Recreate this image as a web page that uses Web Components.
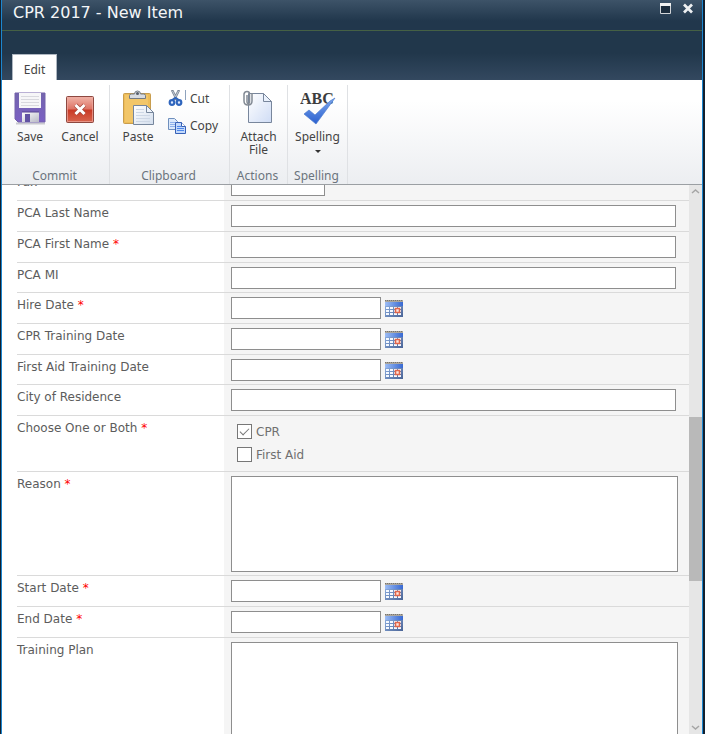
<!DOCTYPE html>
<html lang="en">
<head>
<meta charset="utf-8">
<title>CPR 2017 - New Item</title>
<style>
html,body{margin:0;height:100%;overflow:hidden}
body{font-family:"DejaVu Sans",Verdana,sans-serif;background:#12202e}
</style>
</head>
<body>
<item-dialog></item-dialog>
<script>
const define = (name, html, setup) => customElements.define(name, class extends HTMLElement {
  connectedCallback() {
    if (this.shadowRoot) return;
    const t = document.createElement('template');
    t.innerHTML = typeof html === 'function' ? html(this) : html;
    this.attachShadow({mode:'open'}).append(t.content.cloneNode(true));
    if (setup) setup(this);
  }
});

const icons = {
save:`<svg width="32" height="34" viewBox="0 0 32 34"><defs><linearGradient id="a" x2="0" y2="1"><stop stop-color="#7365ad"/><stop offset="1" stop-color="#7a5fc4"/></linearGradient><linearGradient id="b" x2="1" y2="1"><stop stop-color="#fff"/><stop offset="1" stop-color="#b9b9c6"/></linearGradient></defs><path d="M2 32.500h29" stroke="#c9c9cf" stroke-width="2"/><path d="M1 2h30v29H4l-3-3z" fill="url(#a)" stroke="#7463ab"/><path d="M5 2h22v15H5z" fill="#f6f6f8"/><path d="M7 5.500h18M7 8.500h18M7 11.500h18M7 14.500h18" stroke="#d8d8de"/><path d="M8 21h17v10H8z" fill="url(#b)"/><path d="M11 23h5v8h-5z" fill="#6253a3"/><path d="M8 21h17" stroke="#56458f"/></svg>`,
cancel:`<svg width="32" height="34" viewBox="0 0 32 34"><defs><linearGradient id="a" x2="0" y2="1"><stop stop-color="#f1b5a9"/><stop offset=".48" stop-color="#dd7365"/><stop offset=".52" stop-color="#c93925"/><stop offset="1" stop-color="#d8664f"/></linearGradient></defs><rect x="2.500" y="5.500" width="27" height="26" rx="1" fill="url(#a)" stroke="#8d4840"/><path d="M3.500 6.500h25v24h-25z" fill="none" stroke="#efaaa0" opacity=".7"/><path d="M11.500 14l9 9M20.500 14l-9 9" stroke="#a8483c" stroke-width="4.500"/><path d="M11.500 14l9 9M20.500 14l-9 9" stroke="#fff" stroke-width="3"/></svg>`,
paste:`<svg width="32" height="36" viewBox="0 0 32 36"><defs><linearGradient id="a" x2="1" y2="1"><stop stop-color="#fff"/><stop offset="1" stop-color="#d3deed"/></linearGradient></defs><rect x="1.500" y="3.500" width="27" height="30" rx="1" fill="#eebd58" stroke="#c89d4e"/><path d="M3 5h23v27H3z" fill="#f2c669"/><path d="M7.500 8.500v-3q0-1.500 2-1.500h3q0-3 3-3t3 3h3q2 0 2 1.500v3z" fill="#d8dce1" stroke="#747b85"/><circle cx="15.500" cy="3.500" r="1.500" fill="#555d69"/><path d="M11.500 15.500h13l7 7v12h-20z" fill="url(#a)" stroke="#76869c"/><path d="M24.500 15.500v7h7z" fill="#eef3fa" stroke="#76869c"/><path d="M14 19.500h8M14 22.500h8M14 25.500h14M14 28.500h14M14 31.500h14" stroke="#cdd7e5"/></svg>`,
cut:`<svg width="18" height="17" viewBox="0 0 18 17"><path d="M4 0l5 10M11 0L6 10" stroke="#7c8795" stroke-width="2.500"/><path d="M4.500 1l4 8M10.500 1L7 8" stroke="#c4ccd5"/><path d="M4 10l3.500-2L11 10" fill="none" stroke="#2f65bd" stroke-width="2"/><circle cx="4" cy="12.500" r="2.300" fill="#dfeaff" stroke="#2f65bd" stroke-width="2.200"/><circle cx="11" cy="12.500" r="2.300" fill="#dfeaff" stroke="#2f65bd" stroke-width="2.200"/><path d="M17.500 0v10" stroke="#8fa3bd"/></svg>`,
copy:`<svg width="18" height="16" viewBox="0 0 18 16"><path d="M.5.5h6l3 3v8h-9z" fill="#dce9fb" stroke="#6f8fbd"/><path d="M2 4.500h5M2 6.500h6M2 8.500h6" stroke="#8fb2ec"/><path d="M7.500 4.500h6l4 4v7h-10z" fill="#c3d9fb" stroke="#3761b7"/><path d="M13.500 4.500v4h4" fill="#fff" stroke="#3761b7"/><path d="M9 8.500h4M9 10.500h7M9 12.500h7" stroke="#4d87ea"/></svg>`,
attach:`<svg width="32" height="36" viewBox="0 0 32 36"><defs><linearGradient id="a" x2="1" y2="1"><stop stop-color="#fff"/><stop offset="1" stop-color="#cfdcf5"/></linearGradient></defs><path d="M5.500 3.500h15l8 8v21h-23z" fill="url(#a)" stroke="#78869c"/><path d="M20.500 3.500v8h8z" fill="#eaf1fc" stroke="#78869c"/><path d="M4 5v7q0 1.500 1.300 1.500T6.500 12V4q0-2.500-2.500-2.500T1 4v7q0 4 4 4t4-4V3" fill="none" stroke="#838a94" stroke-width="1.500"/></svg>`,
spelling:`<svg width="36" height="36" viewBox="0 0 36 36"><defs><linearGradient id="a" x2="0" y2="1"><stop stop-color="#7ba7ee"/><stop offset="1" stop-color="#2b60cf"/></linearGradient></defs><text x="0" y="14" font-family="Liberation Serif,serif" font-weight="700" font-size="16" fill="#3d3d3d">ABC</text><path d="M35 8L16 34 4 24l5-4 6 5L30 11z" fill="url(#a)" stroke="#4d7cce" stroke-width=".7"/></svg>`
};

define('tool-button', el => {
  const small = el.hasAttribute('small');
  return `<style>
  :host{display:block}
  button{font:12px/13px "Noto Sans","Open Sans",sans-serif;color:#444;border:0;padding:0;margin:0;background:none;display:flex;align-items:center;
    ${small ? 'gap:4px;height:27px' : 'flex-direction:column;width:100%;padding-top:5px'}}
  .icon{display:flex;align-items:center;justify-content:center;${small ? 'width:18px' : 'height:36px;margin:0 0 4px'}}
  svg{display:block}
  b{width:0;height:0;margin-top:7px;border:3px solid transparent;border-top-color:#333;border-bottom:0}
  </style><button type="button"><span class="icon">${icons[el.getAttribute('icon')]}</span><span><slot></slot></span>${el.hasAttribute('menu') ? '<b></b>' : ''}</button>`;
});

define('ribbon-group', el => `<style>
  :host{display:flex;flex-direction:column;box-sizing:border-box;border-right:1px solid #dfe1e4}
  .tools{flex:1;display:flex;padding-left:var(--inset,0)}
  .name{font:12px/16px "Noto Sans","Open Sans",sans-serif;color:#6b747d;text-align:center;padding-right:2px}
  </style><div class="tools"><slot></slot></div><div class="name">${el.getAttribute('name')}</div>`);

define('calendar-button', `<style>
  :host{display:block}
  button{display:block;border:0;padding:0;background:none}
  svg{display:block}
  </style><button type="button" aria-label="Select a date"><svg width="18" height="18" viewBox="0 0 18 18"><defs><linearGradient id="a" x2="1" y2="0"><stop stop-color="#9dbdf4"/><stop offset="1" stop-color="#3768d2"/></linearGradient><linearGradient id="b" x2="1" y2="1"><stop stop-color="#94b6e8"/><stop offset="1" stop-color="#4a6496"/></linearGradient></defs><path d="M0 2h18v16H0z" fill="url(#b)"/><path d="M0 3h18v4H0z" fill="url(#a)"/><path d="M0 1h18v2H0z" fill="#aaa69e"/><path d="M0 1.500h18" stroke="#77746f" stroke-width="1" stroke-dasharray="1 1"/><path d="M1 8h3v2H1zM5 8h3v2H5zM9 8h3v2H9zM13 8h3v2h-3zM1 11h3v2H1zM5 11h3v2H5zM9 11h3v2H9zM13 11h3v2h-3zM1 14h3v2H1zM5 14h3v2H5zM9 14h3v2H9zM13 14h3v2h-3z" fill="#f5f9ff"/><path d="M10.500 9.500h4v4h-4z" fill="#ffe7de" stroke="#e2664a" stroke-width="1.600"/></svg></button>`);

define('form-field', el => {
  const kind = el.getAttribute('kind') || 'text', label = el.getAttribute('label');
  const control = {
    text:'<input id="c" type="text">',
    short:'<input id="c" class="short" type="text">',
    date:'<input id="c" class="date" type="text"><calendar-button></calendar-button>',
    area:'<textarea id="c"></textarea>',
    choice:'<div id="c" role="group" aria-labelledby="n"><slot></slot></div>'
  }[kind];
  const tag = kind === 'choice' ? 'span' : 'label';
  return `<style>
  :host{display:flex;box-sizing:border-box;min-height:31px;border-top:1px solid #dadada;font-size:12px;line-height:16px;color:#5c5c5c}
  .name{flex:0 0 207px;padding-top:4px}
  em{color:#f00;font-style:normal}
  .field{flex:1;min-width:0;display:flex;gap:4px;align-items:flex-start;background:#f5f5f5;padding:4px 13px 3px 7px}
  input,textarea{box-sizing:border-box;font:inherit;margin:0;border:1px solid #8e8e8e;border-radius:0;background:#fff;outline:0;padding:2px 4px}
  input{height:22px;width:100%}
  .short{width:94px}.date{width:150px}
  calendar-button{padding-top:2px}
  textarea{width:100%;height:96px;resize:none;display:block}
  .area{padding:4px 11px 3px 7px}
  .choice{padding-bottom:5px}
  </style><${tag} class="name" id="n" ${tag === 'label' ? 'for="c"' : ''}>${label}${el.hasAttribute('required') ? ' <em>*</em>' : ''}</${tag}><div class="field ${kind}">${control}</div>`;
});

define('check-option', el => `<style>
  :host{display:block;padding:4px 0 4px 6px;color:#707070}
  label{display:flex;align-items:center;gap:4px;height:15px}
  input{appearance:none;box-sizing:border-box;width:15px;height:15px;margin:0;border:1px solid #777;background:#fff;display:grid;place-items:center}
  input:checked::after{content:"";width:8px;height:4px;border:solid #777;border-width:0 0 1px 1px;rotate:-45deg;margin-bottom:3px}
  </style><label><input type="checkbox" ${el.hasAttribute('checked') ? 'checked' : ''}><span><slot></slot></span></label>`);

define('scroll-rail', `<style>
  :host{flex:0 0 13px;display:flex;flex-direction:column;align-items:center;background:#e6e6e6}
  svg{flex:none}
  .before{flex:219}.thumb{flex:164;width:100%;background:#b9b9b9}.after{flex:140}
  path{fill:none;stroke:#a5a5a5;stroke-width:1.500}
  </style><svg width="9" height="13"><path d="M1 8l3.500-3L8 8"/></svg><div class="before"></div><div class="thumb"></div><div class="after"></div><svg width="9" height="13"><path d="M1 5l3.500 3L8 5"/></svg>`);

define('title-bar', `<style>
  :host{display:flex;box-sizing:border-box;height:31px;border-bottom:1px solid #456044;background:linear-gradient(#3d5368,#21374c 70%);color:#f4f6f8}
  h1{flex:1;margin:0;padding-left:11px;font-size:16px;line-height:26px;font-weight:400}
  .actions{display:flex;gap:10px;padding:2px 8px 0 0;align-items:flex-start}
  button{border:0;background:none;padding:0;display:block}
  svg{display:block}
  </style><h1><slot></slot></h1><div class="actions">
  <button type="button" aria-label="Maximize"><svg width="13" height="13"><path d="M1.500 1.500h10v10h-10z" fill="#1c2d3d" stroke="#d2d5d8"/><path d="M1 1h11v3H1z" fill="#f2f2f2"/></svg></button>
  <button type="button" aria-label="Close"><svg width="12" height="13"><path d="M2 2.500l8 8M10 2.500l-8 8" stroke="#eef0f2" stroke-width="2.700"/></svg></button></div>`);

define('ribbon-bar', `<style>
  :host{display:block;flex:none}
  .tabs{display:flex;align-items:flex-end;height:49px;padding-left:10px;background:linear-gradient(#21374b 45%,#33485f)}
  .tabs button{height:26px;width:45px;border:1px solid #aeb7c1;border-bottom:0;background:#fff;color:#444;padding:4px 0 0;font:12px/16px "Noto Sans","Open Sans",sans-serif}
  .body{display:flex;box-sizing:border-box;height:105px;padding:5px 0 0;border-bottom:1px solid #9b9fa3;background:linear-gradient(#fff 20%,#eceef1)}
  .commit{width:108px}.clip{width:120px}.act{width:58px}.spell{width:60px}
  .big{width:50px}
  .commit,.clip{--inset:3px}
  .act .big,.spell .big{width:100%}
  .mini{padding-left:5px}
  </style><div class="tabs" role="tablist"><button type="button" role="tab" aria-selected="true">Edit</button></div>
  <div class="body">
  <ribbon-group name="Commit" class="commit"><tool-button class="big" icon="save">Save</tool-button><tool-button class="big" icon="cancel">Cancel</tool-button></ribbon-group>
  <ribbon-group name="Clipboard" class="clip"><tool-button class="big" icon="paste">Paste</tool-button><div class="mini"><tool-button small icon="cut">Cut</tool-button><tool-button small icon="copy">Copy</tool-button></div></ribbon-group>
  <ribbon-group name="Actions" class="act"><tool-button class="big" icon="attach">Attach<br>File</tool-button></ribbon-group>
  <ribbon-group name="Spelling" class="spell"><tool-button class="big" icon="spelling" menu>Spelling</tool-button></ribbon-group>
  </div>`);

define('item-dialog', `<style>
  :host{display:flex;flex-direction:column;box-sizing:border-box;height:100vh;margin:0 2px 0 1px;border:solid #1c86cf;border-width:0 1px;background:#fff}
  .view{flex:1;min-height:0;display:flex}
  form{flex:1;min-width:0;overflow:hidden;padding:0 0 40px 15px}
  form-field:nth-child(3n+1){min-height:30px}
  form-field:first-child{min-height:31px}
  </style><title-bar>CPR 2017 - New Item</title-bar><ribbon-bar></ribbon-bar>
  <div class="view"><form>
  <form-field label="Fax" kind="short"></form-field>
  <form-field label="PCA Last Name"></form-field>
  <form-field label="PCA First Name" required></form-field>
  <form-field label="PCA MI"></form-field>
  <form-field label="Hire Date" kind="date" required></form-field>
  <form-field label="CPR Training Date" kind="date"></form-field>
  <form-field label="First Aid Training Date" kind="date"></form-field>
  <form-field label="City of Residence"></form-field>
  <form-field label="Choose One or Both" kind="choice" required><check-option checked>CPR</check-option><check-option>First Aid</check-option></form-field>
  <form-field label="Reason" kind="area" required></form-field>
  <form-field label="Start Date" kind="date" required></form-field>
  <form-field label="End Date" kind="date" required></form-field>
  <form-field label="Training Plan" kind="area"></form-field>
  </form><scroll-rail></scroll-rail></div>`, el => { el.shadowRoot.querySelector('form').scrollTop = 16; });
</script>
</body>
</html>
